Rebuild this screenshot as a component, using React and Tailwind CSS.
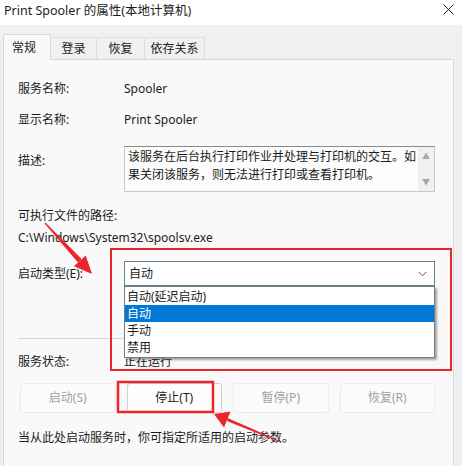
import React from "react";

const font = "font-['Noto_Sans','Noto_Sans_CJK_SC',sans-serif]";

function Tab({ label, active, width }) {
  if (active) {
    return (
      <div className="h-[26px] px-[8px] flex items-center bg-[#f9f9f9] border border-b-0 border-[#d9d9d9] relative top-[1px] w-[48px]">
        {label}
      </div>
    );
  }
  return (
    <div className={`h-[22px] ${width} flex items-center justify-center bg-[#f0f0f0] border border-b-0 border-l-0 border-[#dedede]`}>
      {label}
    </div>
  );
}

function Row({ label, children, className = "" }) {
  return (
    <div className={`flex items-center h-[18px] leading-[18px] ${className}`}>
      <div className="w-[106px] shrink-0">{label}</div>
      <div>{children}</div>
    </div>
  );
}

function Button({ label, enabled }) {
  return (
    <div
      className={
        enabled
          ? "h-[30px] flex items-center justify-center bg-[#fdfdfd] border border-[#d0d0d0] rounded-[3px] text-[#1b1b1b]"
          : "h-[30px] flex items-center justify-center bg-[#fbfbfb] border border-[#ececec] rounded-[3px] text-[#a0a0a0]"
      }
    >
      {label}
    </div>
  );
}

export default function App() {
  const options = ["自动(延迟启动)", "自动", "手动", "禁用"];

  return (
    <div className={`relative w-[462px] h-[466px] overflow-hidden bg-[#f0f0f0] text-[12px] text-[#1b1b1b] ${font}`}>
      {/* Title bar */}
      <div className="h-[25px] bg-white flex items-center justify-between pl-[4px] pr-[8px]">
        <span className="text-[12.5px] leading-[16px] -mt-[3px]">Print Spooler 的属性(本地计算机)</span>
        <svg width="11" height="11" viewBox="0 0 11 11" className="-mt-[6px]">
          <path d="M0.5 0.5 L10.5 10.5 M10.5 0.5 L0.5 10.5" stroke="#222" strokeWidth="1" />
        </svg>
      </div>

      {/* Tabs */}
      <div className="flex items-end pl-[3px] pt-[8px]">
        <Tab label="常规" active />
        <Tab label="登录" width="w-[46px]" />
        <Tab label="恢复" width="w-[48px]" />
        <Tab label="依存关系" width="w-[60px]" />
      </div>

      {/* Panel */}
      <div className="ml-[3px] mr-[8px] h-[420px] bg-[#f9f9f9] border border-[#d9d9d9] pl-[14px] pr-[18px]">
        <Row label="服务名称:" className="mt-[20px]">Spooler</Row>
        <Row label="显示名称:" className="mt-[13px]">Print Spooler</Row>

        <div className="flex mt-[17px]">
          <div className="w-[106px] shrink-0 pt-[6px] leading-[18px]">描述:</div>
          <div className="flex-1 h-[46px] bg-[#fcfcfc] border border-[#c9c9c9] border-t-[#8a8a8a] flex">
            <div className="flex-1 pl-[3px] pt-[1px] leading-[18px]">
              该服务在后台执行打印作业并处理与打印机的交互。如果关闭该服务，则无法进行打印或查看打印机。
            </div>
            <div className="w-[16px] shrink-0 bg-[#f0f0f0] flex flex-col items-center justify-between py-[5px] text-[#a8a8a8] text-[8px] leading-[8px]">
              <span>▲</span>
              <span>▼</span>
            </div>
          </div>
        </div>

        <div className="mt-[15px] h-[18px] leading-[18px]">可执行文件的路径:</div>
        <div className="mt-[4px] h-[18px] leading-[18px]">C:\Windows\System32\spoolsv.exe</div>

        <div className="flex items-center mt-[14px]">
          <div className="w-[106px] shrink-0 leading-[18px] pt-[1px]">启动类型(E):</div>
          <div className="relative flex-1">
            <div className="h-[25px] bg-white border border-[#5d8297] flex items-center justify-between pl-[4px] pr-[7px]">
              <span>自动</span>
              <svg width="9" height="6" viewBox="0 0 9 6">
                <path d="M0.5 0.8 L4.5 4.8 L8.5 0.8" fill="none" stroke="#555" strokeWidth="1" />
              </svg>
            </div>
            <div className="absolute left-0 right-0 top-[25px] z-10 bg-white border border-[#7a7a7a] shadow-[2px_2px_2px_rgba(0,0,0,0.35)] py-[1px]">
              {options.map((o, i) => (
                <div
                  key={o}
                  className={
                    i === 1
                      ? "h-[17px] leading-[17px] pl-[2px] bg-[#0078d7] text-white"
                      : "h-[17px] leading-[17px] pl-[2px]"
                  }
                >
                  {o}
                </div>
              ))}
            </div>
          </div>
        </div>

        <div className="mt-[52px] h-px bg-[#d5d5d5]" />

        <Row label="服务状态:" className="mt-[14px]">正在运行</Row>

        <div className="grid grid-cols-4 gap-[11px] mt-[12px] pl-[2px]">
          <Button label="启动(S)" />
          <Button label="停止(T)" enabled />
          <Button label="暂停(P)" />
          <Button label="恢复(R)" />
        </div>

        <div className="mt-[16px] h-[18px] leading-[18px]">当从此处启动服务时，你可指定所适用的启动参数。</div>
      </div>

      {/* Annotations */}
      <svg className="absolute inset-0 z-20 pointer-events-none" width="462" height="466" viewBox="0 0 462 466">
        <rect x="111" y="249" width="340" height="121" fill="none" stroke="#e8262c" strokeWidth="2" />
        <rect x="118" y="382" width="95" height="30" fill="none" stroke="#e8262c" strokeWidth="2.5" />
        <polygon points="44.6,223.4 45.4,222.6 81.6,259.1 78,262.5" fill="#e8262c" />
        <polygon points="92,274 73.9,266.2 85.7,255.4" fill="#e8262c" />
        <polygon points="281.2,441.5 280.8,442.5 228,421.5 225.8,417.3" fill="#e8262c" />
        <polygon points="214,414 230.5,411.5 224,427.5" fill="#e8262c" />
      </svg>
    </div>
  );
}
